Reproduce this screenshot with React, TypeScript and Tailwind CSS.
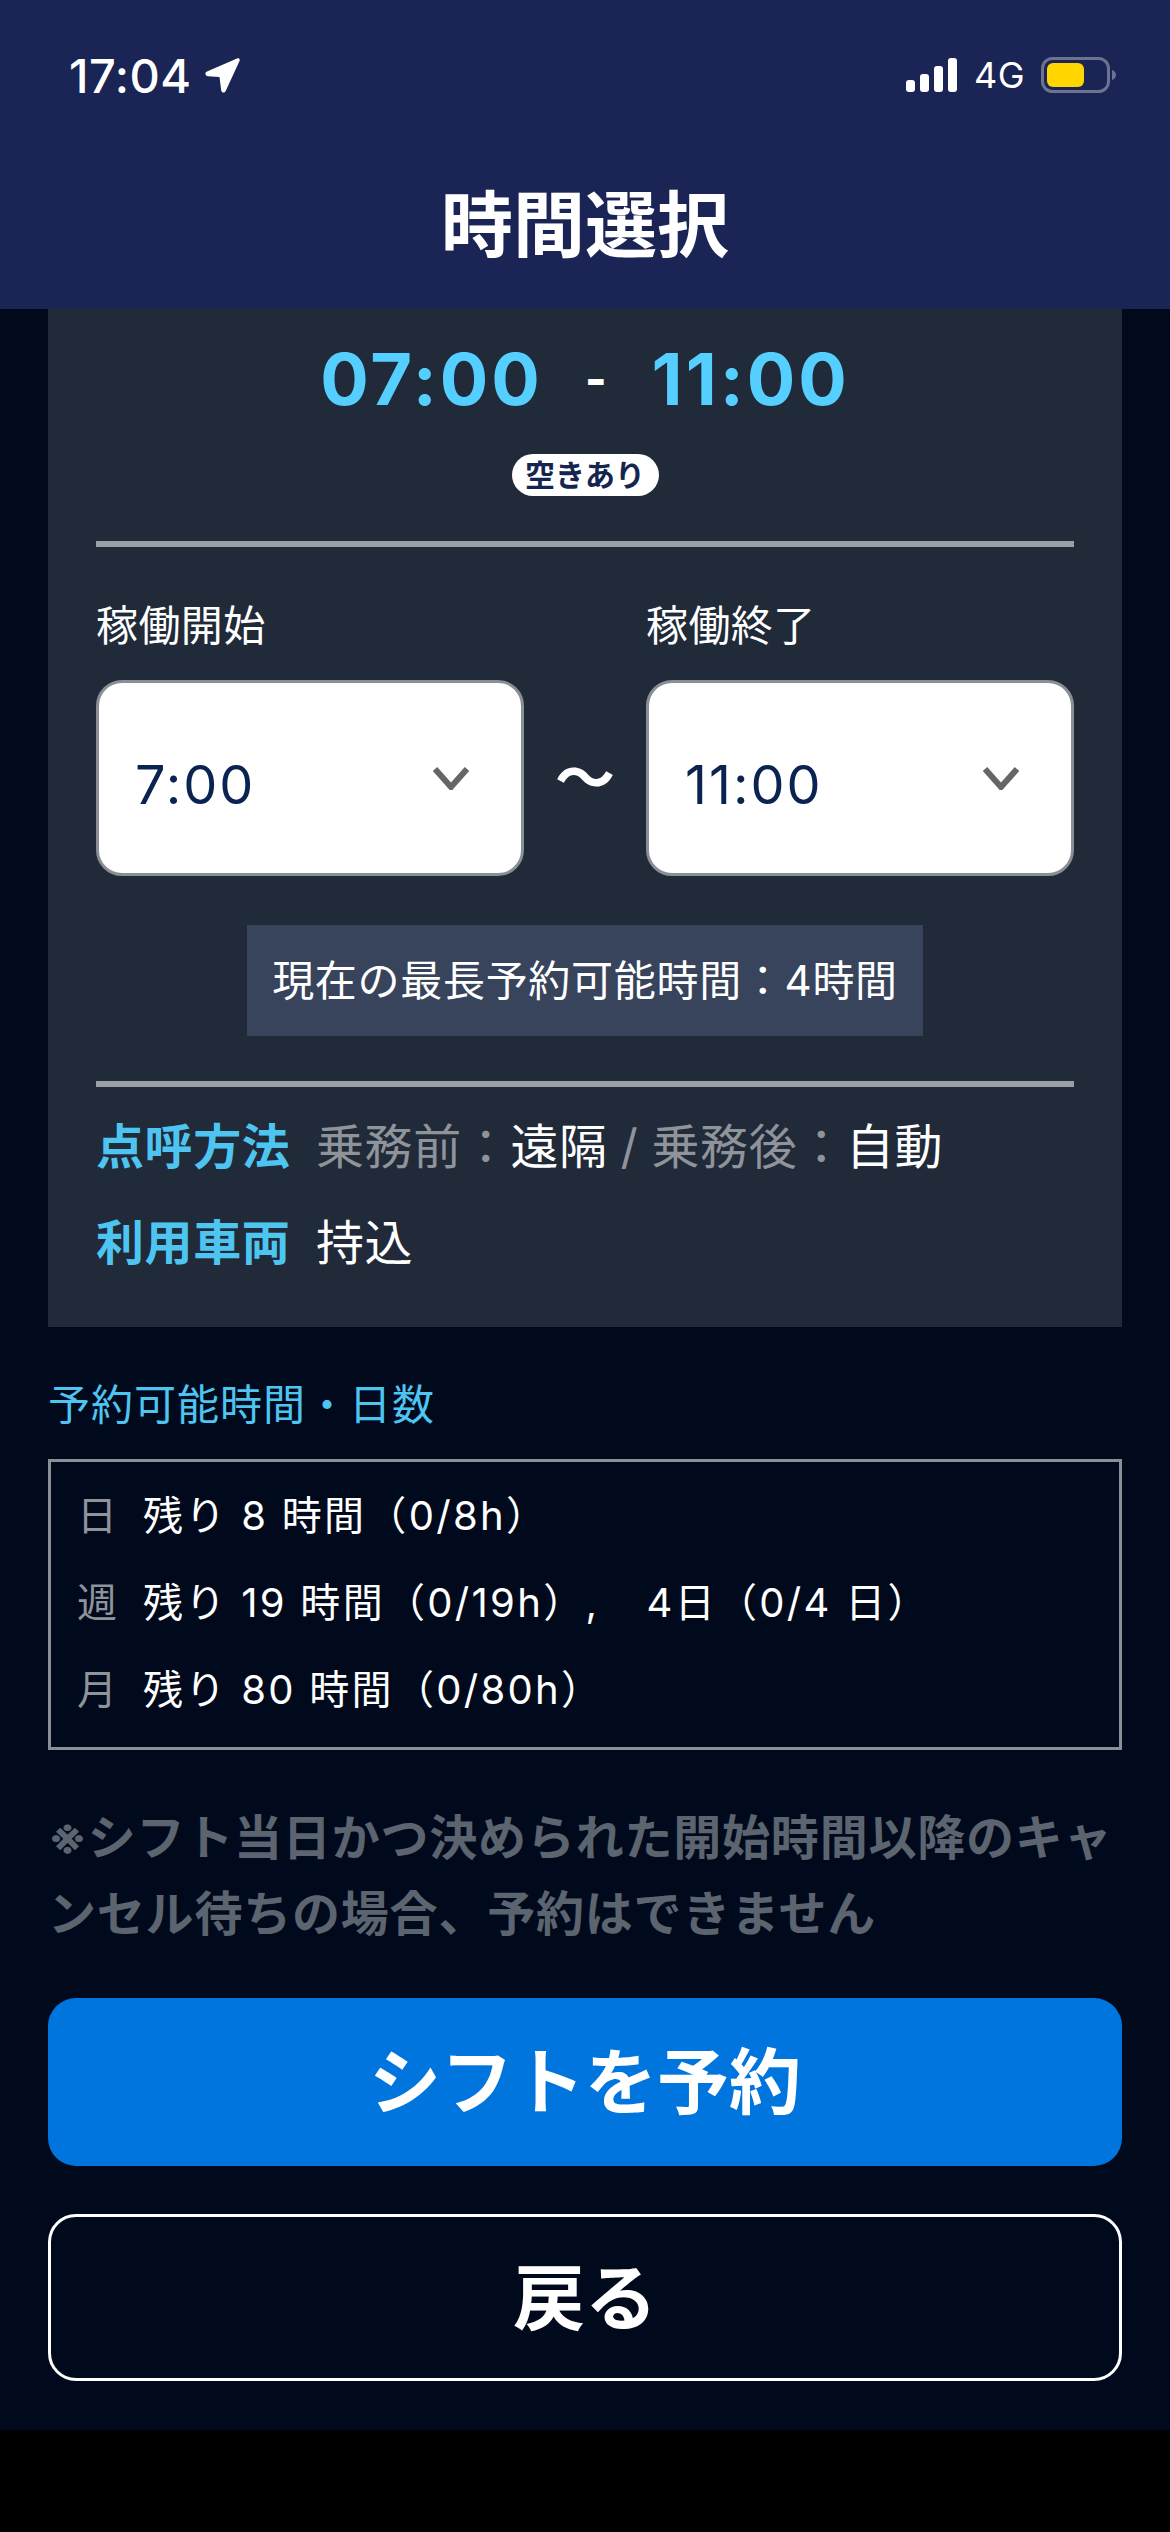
function StatusBar() {
  return (
    <div className="flex items-center justify-between h-[58px] pl-[69px] pr-[54px] text-white">
      <div className="flex items-center gap-[12px]">
        <span className="text-[47px] font-medium leading-none tracking-[0.5px]">17:04</span>
        <svg width="36" height="36" viewBox="0 0 36 36" fill="#fff">
          <path d="M33 1.5 3 14.5c-2.600 1.200-2 4.500 1 4.700l11.500.7 1.700 13.300c.4 2.800 3.600 3.200 4.600.6L35.500 4c.8-2-.6-3.300-2.500-2.500z" />
        </svg>
      </div>
      <div className="flex items-center">
        <svg width="52" height="34" viewBox="0 0 52 34" fill="#fff">
          <rect x="0" y="22" width="9" height="12" rx="3" />
          <rect x="14" y="16" width="9" height="18" rx="3" />
          <rect x="28" y="8" width="9" height="26" rx="3" />
          <rect x="42" y="0" width="9" height="34" rx="3" />
        </svg>
        <span className="ml-[16px] text-[36px] leading-none tracking-[0.5px]">4G</span>
        <svg className="ml-[16px]" width="75" height="36" viewBox="0 0 75 36">
          <rect x="1.500" y="1.500" width="66" height="33" rx="10" fill="none" stroke="#6c7290" strokeWidth="3" />
          <rect x="6" y="6" width="37" height="24" rx="6" fill="#ffd600" />
          <path d="M71 13c2.500.8 4 2.800 4 5s-1.500 4.200-4 5z" fill="#6c7290" />
        </svg>
      </div>
    </div>
  );
}

function Chevron() {
  return (
    <svg width="36" height="24" viewBox="0 0 36 24" fill="none" stroke="#666" strokeWidth="6">
      <path d="M2 3 18 21 34 3" />
    </svg>
  );
}

function TimeSelect({ value }: { value: string }) {
  return (
    <div className="flex items-center justify-between w-[428px] h-[196px] rounded-[26px] border-[3px] border-[#8a8e95] bg-white pl-[36px] pr-[52px]">
      <span className="mt-[14px] text-[54px] leading-none text-[#0a2350] tracking-[2px]">{value}</span>
      <Chevron />
    </div>
  );
}

function QuotaRow({ label, children }: { label: string; children: React.ReactNode }) {
  return (
    <div className="flex items-center h-[87px] pl-[26px]">
      <span className="w-[40px] mr-[26px] text-center text-[40px] leading-none text-[#8f939a]">{label}</span>
      <span className="text-[40px] leading-none text-white tracking-[2.3px]">{children}</span>
    </div>
  );
}

export default function App() {
  return (
    <div className="w-[1170px] h-[2532px] bg-black font-['Inter','Noto_Sans_CJK_JP',sans-serif]">
      <div className="h-[309px] bg-[#1a2555] pt-[46px]">
        <StatusBar />
        <div className="mt-[71px] h-[100px] flex items-center justify-center text-[72px] font-bold text-white">
          時間選択
        </div>
      </div>

      <div className="bg-[#000a1c] px-[48px] pb-[49px]">
        <div className="bg-[#202a38] px-[48px] pt-[20px] pb-[54px]">
          <div className="flex items-center justify-center gap-[42px] h-[100px] text-[72px] font-bold leading-none text-[#55cfff] tracking-[3px]">
            <span>07:00</span>
            <span className="text-[46px] font-extrabold text-white">-</span>
            <span>11:00</span>
          </div>
          <div className="mt-[25px] flex justify-center">
            <span className="flex items-center justify-center w-[147px] h-[42px] rounded-full bg-white text-[30px] font-bold text-[#14264f]">
              空きあり
            </span>
          </div>
          <div className="mt-[45px] h-[6px] bg-[#9a9ea6]" />

          <div className="mt-[48px] flex justify-between">
            <div className="w-[428px] h-[60px] flex items-center text-[42px] text-white tracking-[0.4px]">稼働開始</div>
            <div className="w-[428px] h-[60px] flex items-center text-[42px] text-white tracking-[0.4px]">稼働終了</div>
          </div>
          <div className="mt-[25px] flex items-center justify-between">
            <TimeSelect value="7:00" />
            <span className="text-[60px] font-bold leading-none text-white">〜</span>
            <TimeSelect value="11:00" />
          </div>

          <div className="mt-[49px] flex justify-center">
            <div className="flex items-center justify-center w-[676px] h-[111px] bg-[#37445c] text-[42px] text-white tracking-[0.7px]">
              現在の最長予約可能時間：4時間
            </div>
          </div>
          <div className="mt-[45px] h-[6px] bg-[#9a9ea6]" />

          <div className="mt-[30px] h-[60px] flex items-center text-[48px] tracking-[0.6px]">
            <span className="w-[220px] font-bold text-[#4ec5f1]">点呼方法</span>
            <span className="text-[#8f939a]">乗務前：</span>
            <span className="text-white">遠隔</span>
            <span className="mx-[13px] text-[#8f939a]">/</span>
            <span className="text-[#8f939a]">乗務後：</span>
            <span className="text-white">自動</span>
          </div>
          <div className="mt-[36px] h-[60px] flex items-center text-[48px] tracking-[0.6px]">
            <span className="w-[220px] font-bold text-[#4ec5f1]">利用車両</span>
            <span className="text-white">持込</span>
          </div>
        </div>

        <div className="mt-[47px] h-[60px] flex items-center text-[42px] text-[#4ec5f1] tracking-[1px]">予約可能時間・日数</div>
        <div className="mt-[25px] h-[291px] border-[3px] border-[#8a8e95] pt-[10px]">
          <QuotaRow label="日">残り 8 時間（0/8h）</QuotaRow>
          <QuotaRow label="週">
            残り 19 時間（0/19h）,　<span className="ml-[5px]">4日（0/4 日）</span>
          </QuotaRow>
          <QuotaRow label="月">残り 80 時間（0/80h）</QuotaRow>
        </div>

        <p className="mt-[50px] text-[48px] font-bold leading-[76px] text-[#5c6470] tracking-[0.8px]">
          ※シフト当日かつ決められた開始時間以降のキャンセル待ちの場合、予約はできません
        </p>

        <button className="mt-[46px] w-full h-[168px] rounded-[28px] bg-[#0075de] text-[72px] font-bold text-white">
          シフトを予約
        </button>
        <button className="mt-[48px] w-full h-[167px] rounded-[28px] border-[3px] border-white text-[72px] font-bold text-white">
          戻る
        </button>
      </div>
    </div>
  );
}
